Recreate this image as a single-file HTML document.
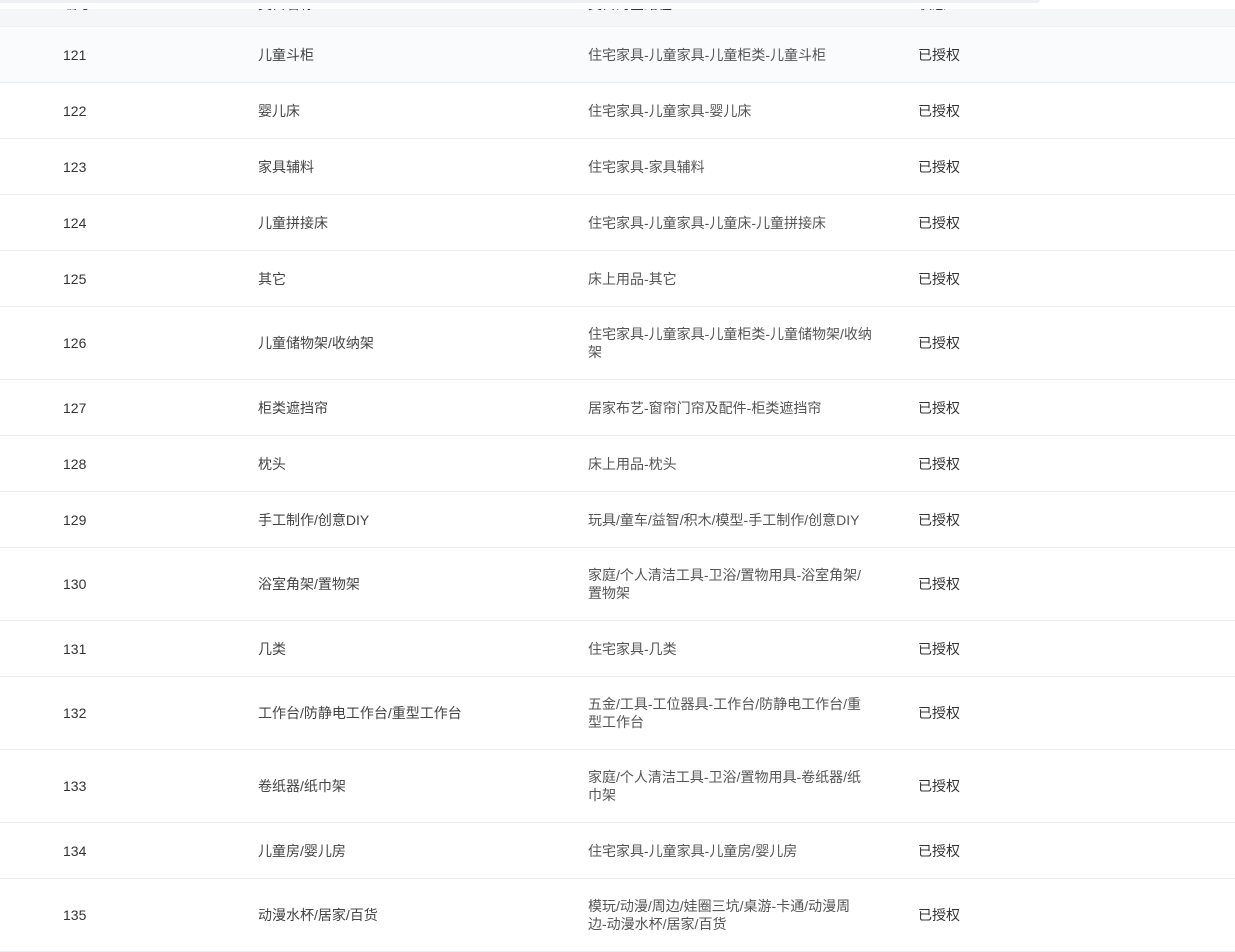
<!DOCTYPE html>
<html><head><meta charset="utf-8"><style>
body{margin:0;width:1235px;height:942px;overflow:hidden;background:#fff;font-family:"Liberation Sans","Noto Sans CJK SC",sans-serif;font-size:14px;color:#333;position:relative}
table{border-collapse:collapse;width:1235px;position:absolute;top:-18px;left:0;table-layout:fixed}
td,th{padding:0;text-align:left;border-bottom:1px solid #ebeef5;vertical-align:middle;font-weight:normal;line-height:18px}
th{background:#f5f6f8;height:44px;color:#333;border-bottom:1px solid #eef0f3}
td.a,th.a{padding-left:63px}
td.c div{width:289px;color:#555;word-break:break-all}
td.b{color:#444}
tr.r1{height:56px}tr.r2{height:73px}
tr.h td{background:#fafbfc}
.top{position:absolute;top:0;left:0;width:1235px;height:9px;background:#fff;z-index:2}
.bar{position:absolute;top:0;left:0;width:1040px;height:3px;background:#eeeff1;border-radius:0 0 6px 0}
</style></head><body>
<div class="top"><div class="bar"></div></div>
<table>
<colgroup><col style="width:258px"><col style="width:330px"><col style="width:330px"><col></colgroup>
<tr><th class="a">编号</th><th class="b">类目名称</th><th class="c">类目的全路径</th><th>状态</th></tr>
<tr class="r1 h"><td class="a">121</td><td class="b">儿童斗柜</td><td class="c"><div>住宅家具-儿童家具-儿童柜类-儿童斗柜</div></td><td>已授权</td></tr>
<tr class="r1"><td class="a">122</td><td class="b">婴儿床</td><td class="c"><div>住宅家具-儿童家具-婴儿床</div></td><td>已授权</td></tr>
<tr class="r1"><td class="a">123</td><td class="b">家具辅料</td><td class="c"><div>住宅家具-家具辅料</div></td><td>已授权</td></tr>
<tr class="r1"><td class="a">124</td><td class="b">儿童拼接床</td><td class="c"><div>住宅家具-儿童家具-儿童床-儿童拼接床</div></td><td>已授权</td></tr>
<tr class="r1"><td class="a">125</td><td class="b">其它</td><td class="c"><div>床上用品-其它</div></td><td>已授权</td></tr>
<tr class="r2"><td class="a">126</td><td class="b">儿童储物架/收纳架</td><td class="c"><div>住宅家具-儿童家具-儿童柜类-儿童储物架/收纳<br>架</div></td><td>已授权</td></tr>
<tr class="r1"><td class="a">127</td><td class="b">柜类遮挡帘</td><td class="c"><div>居家布艺-窗帘门帘及配件-柜类遮挡帘</div></td><td>已授权</td></tr>
<tr class="r1"><td class="a">128</td><td class="b">枕头</td><td class="c"><div>床上用品-枕头</div></td><td>已授权</td></tr>
<tr class="r1"><td class="a">129</td><td class="b">手工制作/创意DIY</td><td class="c"><div>玩具/童车/益智/积木/模型-手工制作/创意DIY</div></td><td>已授权</td></tr>
<tr class="r2"><td class="a">130</td><td class="b">浴室角架/置物架</td><td class="c"><div>家庭/个人清洁工具-卫浴/置物用具-浴室角架/<br>置物架</div></td><td>已授权</td></tr>
<tr class="r1"><td class="a">131</td><td class="b">几类</td><td class="c"><div>住宅家具-几类</div></td><td>已授权</td></tr>
<tr class="r2"><td class="a">132</td><td class="b">工作台/防静电工作台/重型工作台</td><td class="c"><div>五金/工具-工位器具-工作台/防静电工作台/重<br>型工作台</div></td><td>已授权</td></tr>
<tr class="r2"><td class="a">133</td><td class="b">卷纸器/纸巾架</td><td class="c"><div>家庭/个人清洁工具-卫浴/置物用具-卷纸器/纸<br>巾架</div></td><td>已授权</td></tr>
<tr class="r1"><td class="a">134</td><td class="b">儿童房/婴儿房</td><td class="c"><div>住宅家具-儿童家具-儿童房/婴儿房</div></td><td>已授权</td></tr>
<tr class="r2"><td class="a">135</td><td class="b">动漫水杯/居家/百货</td><td class="c"><div>模玩/动漫/周边/娃圈三坑/桌游-卡通/动漫周<br>边-动漫水杯/居家/百货</div></td><td>已授权</td></tr>
</table>
</body></html>
